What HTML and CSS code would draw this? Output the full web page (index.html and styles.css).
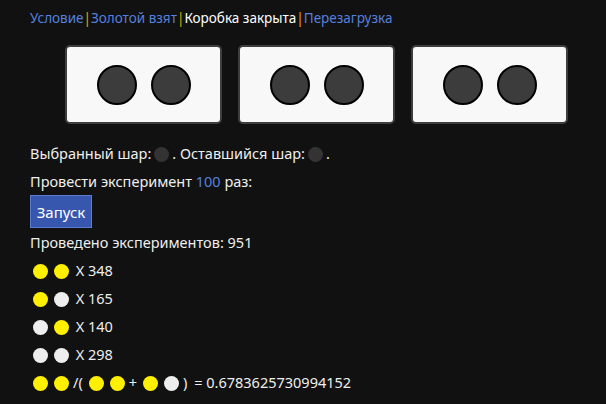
FILE: index.html
```html
<!DOCTYPE html>
<html lang="ru">

<head>
    <meta charset="UTF-8">
    <meta name="viewport" content="width=device-width, initial-scale=1.0">
    <title>Коробка закрыта</title>
    <link rel="stylesheet" href="styles.css">
</head>

<body>
    <div class="page">
        <nav class="tabs">
            <a href="#">Условие</a><span class="sep">|</span><a href="#">Золотой взят</a><span class="sep">|</span><span class="current">Коробка закрыта</span><span class="sep">|</span><a href="#">Перезагрузка</a>
        </nav>

        <div class="boxes">
            <div class="box"><span class="big-ball"></span><span class="big-ball"></span></div>
            <div class="box"><span class="big-ball"></span><span class="big-ball"></span></div>
            <div class="box"><span class="big-ball"></span><span class="big-ball"></span></div>
        </div>

        <p class="line">Выбранный шар:<span class="ball dark"></span>. Оставшийся шар:<span class="ball dark"></span>.</p>
        <p class="line">Провести эксперимент <span class="num">100</span> раз:</p>
        <button class="run">Запуск</button>
        <p class="line">Проведено экспериментов: 951</p>

        <!-- итоги -->
        <p class="line"><span class="ball gold"></span><span class="ball gold"></span> X 348</p>
        <p class="line"><span class="ball gold"></span><span class="ball silver"></span> X 165</p>
        <p class="line"><span class="ball silver"></span><span class="ball gold"></span> X 140</p>
        <p class="line"><span class="ball silver"></span><span class="ball silver"></span> X 298</p>
        <p class="line"><span class="ball gold"></span><span class="ball gold"></span><span class="op">/(</span><span class="ball gold"></span><span class="ball gold"></span><span class="op">+</span><span class="ball gold"></span><span class="ball silver"></span><span class="op">)</span> = 0.6783625730994152</p>
    </div>
</body>

</html>
```

FILE: styles.css
```css
* {
    margin: 0;
    padding: 0;
    box-sizing: border-box;
}

body {
    background-color: #111;
    color: #eee;
    font-family: "Noto Sans", "Liberation Sans", sans-serif;
    font-size: 14.5px;
}

.page {
    padding: 4px 30px 0;
}

.tabs {
    line-height: 28px;
    font-size: 13.5px;
}

.tabs a {
    color: #5580dd;
    text-decoration: none;
}

.tabs .sep {
    color: #e0a800;
}

.tabs .current {
    color: #fff;
}

.boxes {
    display: flex;
    gap: 16px;
    margin: 13px 0 15px 35px;
}

.box {
    width: 157px;
    height: 79px;
    background-color: #f8f8f8;
    border: 2px solid #3e3e3e;
    border-radius: 5px;
    display: flex;
    justify-content: center;
    align-items: center;
    gap: 14px;
}

.big-ball {
    width: 40px;
    height: 40px;
    border-radius: 50%;
    background-color: #3c3c3c;
    border: 2px solid #000;
}

.line {
    line-height: 28px;
    height: 28px;
}

.num {
    color: #5580dd;
}

.ball {
    display: inline-block;
    width: 15px;
    height: 15px;
    border-radius: 50%;
    margin: 0 3px;
    vertical-align: -3px;
}

.ball.dark {
    background-color: #333;
}

.ball.gold {
    background-color: #fff000;
}

.ball.silver {
    background-color: #eee;
}

/* скобки и плюс в формуле */
.op {
    padding: 0 1px;
    margin-right: 2px;
}

.run {
    display: block;
    width: 62px;
    height: 33px;
    background-color: #3657ad;
    border: 1px solid #5a7bd0;
    color: #fff;
    font-family: inherit;
    font-size: 15px;
}
```
